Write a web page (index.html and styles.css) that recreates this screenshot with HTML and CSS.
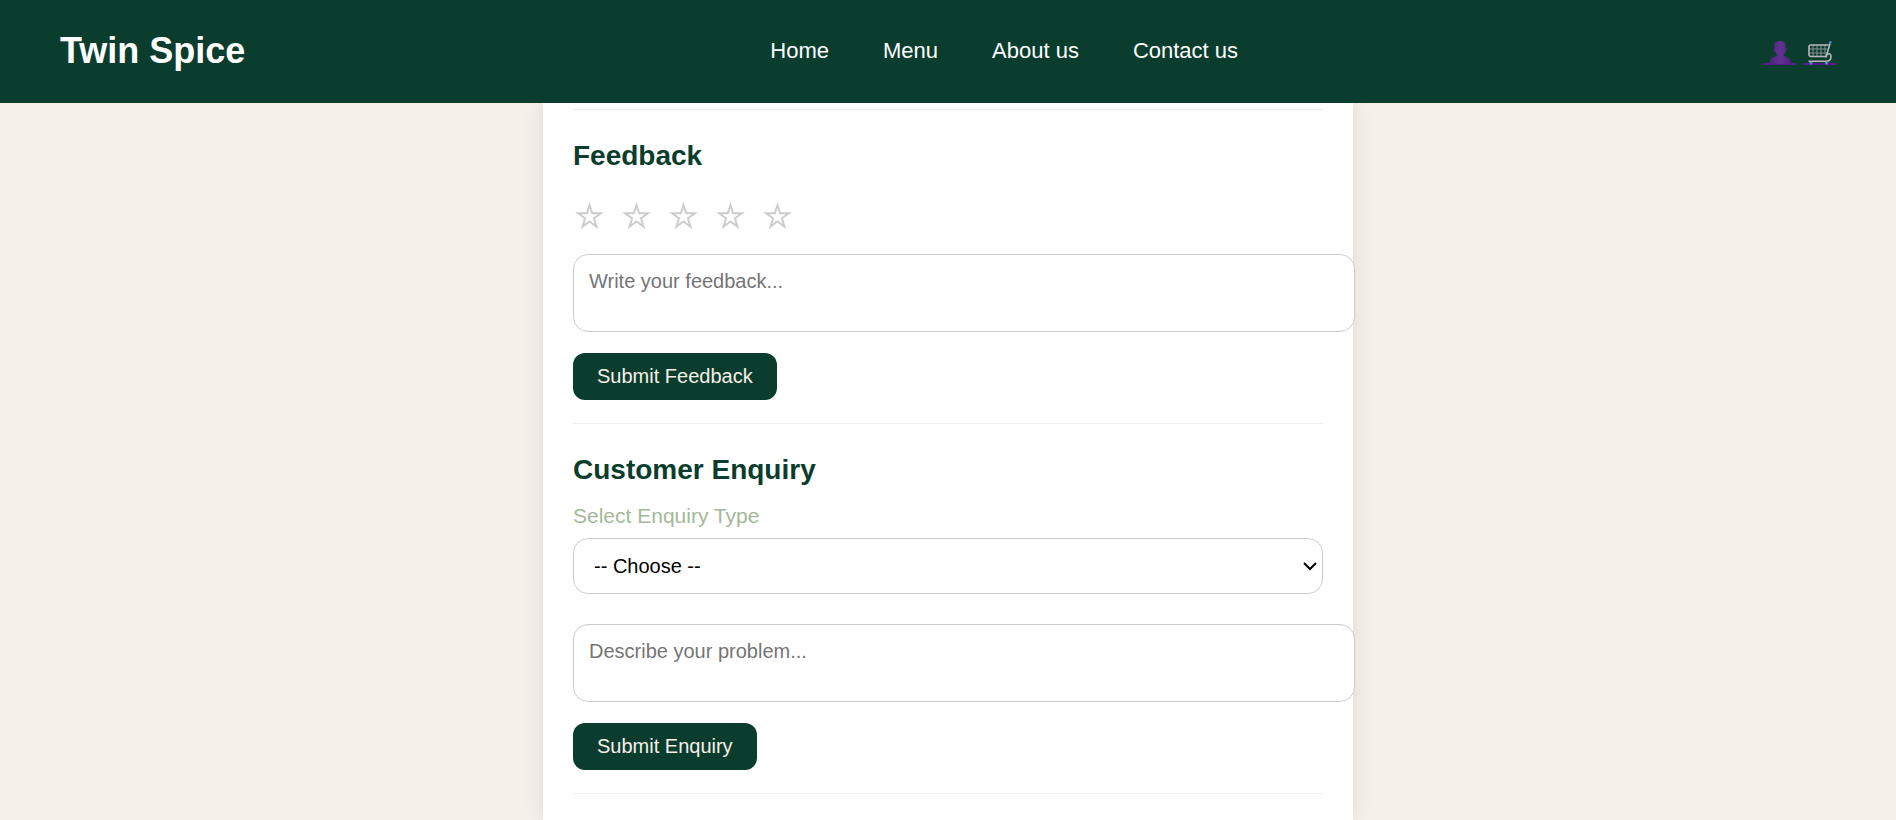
FILE: index.html
```html
<!DOCTYPE html>
<html lang="en">
<head>
    <meta charset="UTF-8">
    <meta name="viewport" content="width=device-width, initial-scale=1.0">
    <title>Twin Spice</title>
    <link rel="stylesheet" href="styles.css">
</head>
<body>
<!-- star outline shared by the rating buttons -->
<svg class="sprite" aria-hidden="true">
    <symbol id="star" viewBox="0 0 31 28">
        <path d="M16.5 3.2 19.2 11.2H27.9L20.9 16.3 23.5 24.600 16.5 19.500 9.500 24.600 12.1 16.3 5.1 11.2H13.8Z" fill="none" stroke="currentColor" stroke-width="2"/>
    </symbol>
</svg>

<header class="navbar">
    <div class="logo">Twin Spice</div>
    <nav class="nav-links">
        <a href="#">Home</a>
        <a href="#">Menu</a>
        <a href="#">About us</a>
        <a href="#">Contact us</a>
    </nav>
    <div class="nav-icons">
        <a href="#" aria-label="Profile">
            <svg viewBox="0 0 33 24">
                <defs>
                    <linearGradient id="bust" x1="0" x2="1">
                        <stop offset="0" stop-color="#4a2378"/>
                        <stop offset="0.5" stop-color="#5e3391"/>
                        <stop offset="1" stop-color="#4d2080"/>
                    </linearGradient>
                </defs>
                <path d="M6 23c0-5 4-7.500 8-8l-1-3c-1-.5-2-2-2-4 0-1 .3-1 .5-1C11 2 13 0 17 0s6 2 5.500 7c1 0 1 0 1 1 0 2-1 3.500-2 4l-1 3c4 .5 8 3 8 8z" fill="url(#bust)"/>
            </svg>
        </a>
        <a href="#" aria-label="Cart">
            <svg viewBox="0 0 33 24" fill="none" stroke="#b8b8b8" stroke-width="1.600">
                <path d="M10 4v11M14 4v11M18 4v11M22 4v9M6 8h18M6 12h18" stroke="#87908d" stroke-width="1"/>
                <path d="M27 2.500l-4 14M25.500 4H8q-2 0-2 2v7.500q0 2 2 2h15"/>
                <path d="M22.500 14.500c3-3 5.500-2 5.500 1 0 3-2 4.700-5 4.700H5.500"/>
                <path d="M26 2l2.500-1" stroke="#4d8fc4" stroke-width="2"/>
                <circle cx="8" cy="22" r="0.8" stroke="#4d8fc4"/>
                <circle cx="23.500" cy="22" r="0.8" stroke="#4d8fc4"/>
            </svg>
        </a>
    </div>
</header>

<main class="container">
    <hr>
    <section class="card-section">
        <h2>Feedback</h2>
        <div class="stars">
            <button type="button" aria-label="1 star"><svg><use href="#star"/></svg></button>
            <button type="button" aria-label="2 stars"><svg><use href="#star"/></svg></button>
            <button type="button" aria-label="3 stars"><svg><use href="#star"/></svg></button>
            <button type="button" aria-label="4 stars"><svg><use href="#star"/></svg></button>
            <button type="button" aria-label="5 stars"><svg><use href="#star"/></svg></button>
        </div>
        <textarea rows="2" aria-label="Feedback" placeholder="Write your feedback..."></textarea>
        <button type="submit" class="btn">Submit Feedback</button>
    </section>
    <hr>
    <section class="card-section">
        <h2>Customer Enquiry</h2>
        <label for="enquiryType">Select Enquiry Type</label>
        <select id="enquiryType">
            <option>-- Choose --</option>
            <option>Order</option>
            <option>Payment</option>
            <option>Delivery</option>
        </select>
        <textarea rows="2" aria-label="Problem" placeholder="Describe your problem..."></textarea>
        <button type="submit" class="btn">Submit Enquiry</button>
    </section>
    <hr>
</main>

<script>
    // fill every star up to the clicked one
    const stars = document.querySelectorAll('.stars button');
    stars.forEach((star, index) => {
        star.addEventListener('click', () => {
            stars.forEach((s, i) => s.classList.toggle('active', i <= index));
        });
    });
</script>
</body>
</html>
```

FILE: styles.css
```css
:root {
    --green: #0b3d2e;
    --cream: #f5f0e8;
    --sage: #a3b899;
    --border: #ccc;
}

body {
    margin: 0;
    min-height: 100vh;
    display: flex;
    flex-direction: column;
    background-color: var(--cream);
    font-family: Arial, "Liberation Sans", sans-serif;
}

.sprite {
    display: none;
}

/* Navbar */
.navbar {
    position: sticky;
    top: 0;
    z-index: 10;
    display: flex;
    justify-content: space-between;
    align-items: center;
    height: 103px;
    padding: 0 60px;
    background-color: var(--green);
}

.logo {
    padding-bottom: 2px;
    font-size: 36px;
    font-weight: bold;
    color: #fff;
}

.nav-links {
    display: flex;
    gap: 54px;
    padding-bottom: 2px;
}

.nav-links a {
    color: #fff;
    font-size: 22px;
    text-decoration: none;
}

.nav-icons {
    display: flex;
    gap: 7px;
    padding-top: 3px;
}

/* underline runs behind the icon */
.nav-icons a {
    background: linear-gradient(#551a8b, #551a8b) bottom / 100% 2px no-repeat;
}

.nav-icons svg {
    display: block;
    width: 33px;
    height: 24px;
}

/* Card */
.container {
    flex: 1;
    width: 100%;
    max-width: 750px;
    box-sizing: content-box;
    margin: 0 auto;
    padding: 6px 30px 24px;
    background-color: #fff;
    box-shadow: 0 0 20px rgba(0, 0, 0, 0.1);
}

hr {
    margin: 0;
    border: none;
    border-top: 1px solid #eee;
}

.card-section {
    padding: 30px 0 23px;
}

h2 {
    margin: 0 0 18px;
    font-size: 28px;
    line-height: 32px;
    color: var(--green);
}

.stars {
    display: flex;
    gap: 16px;
    padding: 12px 0 24px;
}

.stars button {
    padding: 0;
    border: none;
    background: none;
    color: var(--border);
    cursor: pointer;
}

.stars button.active {
    color: gold;
}

.stars svg {
    display: block;
    width: 31px;
    height: 28px;
}

label {
    display: block;
    margin-bottom: 10px;
    font-size: 21px;
    line-height: 24px;
    color: var(--sage);
}

select,
textarea {
    display: block;
    width: 100%;
    padding: 15px;
    border: 1px solid var(--border);
    border-radius: 15px;
    background-color: #fff;
    font-family: inherit;
    font-size: 20px;
}

select {
    appearance: none;
    box-sizing: border-box;
    height: 56px;
    margin-bottom: 30px;
    padding: 0 20px;
    color: #000;
    background-image: url("data:image/svg+xml,%3Csvg xmlns='http://www.w3.org/2000/svg' width='14' height='9' viewBox='0 0 14 9' fill='none' stroke='%23000' stroke-width='2'%3E%3Cpath d='M1 1l6 6 6-6'/%3E%3C/svg%3E");
    background-repeat: no-repeat;
    background-position: right 5px center;
}

textarea {
    margin: 0 0 21px;
    line-height: 23px;
    resize: none;
}

.btn {
    display: block;
    padding: 12px 24px;
    border: none;
    border-radius: 12px;
    background-color: var(--green);
    color: var(--cream);
    font-family: inherit;
    font-size: 20px;
    line-height: 23px;
    cursor: pointer;
}
```
